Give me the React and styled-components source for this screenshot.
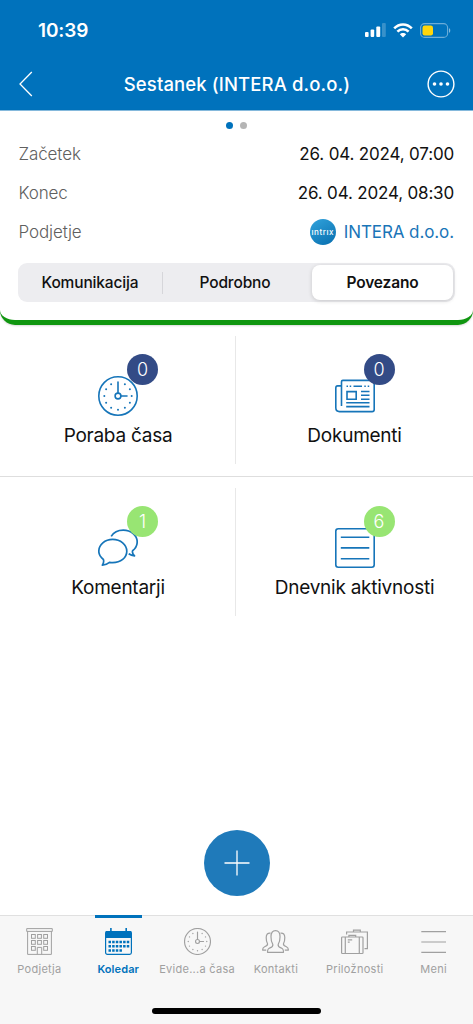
import React from "react";
import styled, { createGlobalStyle } from "styled-components";

const blue = "#0072bc";

const GlobalStyle = createGlobalStyle`
  * {
    box-sizing: border-box;
  }

  body {
    margin: 0;
    background: #fff;
    font-family: Inter, "Liberation Sans", sans-serif;
  }
`;

/* icons */

const dialDots = Array.from({ length: 12 }, (_, i) => i).filter((i) => i !== 0);

const ClockIcon = ({ size, stroke }) => (
  <svg width={size} height={size} viewBox="0 0 40 40" fill="none" stroke="currentColor" strokeWidth={stroke}>
    <circle cx="20" cy="20" r="19.2" />
    <circle cx="20" cy="20" r="2.9" />
    <path d="M20 17.1V6M22.9 20H29" strokeLinecap="round" />
    {dialDots.map((i) => (
      <circle
        key={i}
        cx={20 + 13.7 * Math.sin((i * Math.PI) / 6)}
        cy={20 - 13.7 * Math.cos((i * Math.PI) / 6)}
        r="1"
        fill="currentColor"
        stroke="none"
      />
    ))}
  </svg>
);

const NewsIcon = () => (
  <svg width="40" height="40" viewBox="0 0 40 40" fill="none" stroke="currentColor" strokeWidth="1.6">
    <path d="M6.5 30V5.8Q6.5 4.400 7.900 4.400H37.600Q39.200 4.400 39.200 6V33.500Q39.200 35.600 37.100 35.600H4.500Q.8 35.600.8 31.800V12Q.8 9.900 2.600 9.900H6.500" />
    <path d="M11.500 10.200H13M14.700 10.200H16.200M18.500 10.200H27M29.300 10.200H30.800M32.700 10.200H34.200" />
    <path d="M12 15.600H21.200V23.200H12ZM26 15.500H34.500M26 19.300H34.500M26 23.200H34.500M11.200 26.700H34.500M11.200 30.600H34.500" />
  </svg>
);

const ChatIcon = () => (
  <svg width="40" height="40" viewBox="0 0 40 40" fill="none" stroke="currentColor" strokeWidth="1.7" strokeLinejoin="round">
    <path d="M4.300 37.200C5.800 35.200 6 33.600 5.400 31.500C2.500 29.300.8 26.500.8 23.300C.8 16.700 6.900 11.400 14.700 11.400S28.800 16.700 28.800 23.300S22.600 34.600 14.700 34.600C13.600 34.600 12.500 34.500 11.500 34.300C9.600 35.800 7.300 36.700 4.300 37.200Z" />
    <path d="M13.200 8.400C15.500 4.500 20 2.100 25.300 2.100C33 2.100 39.200 7.300 39.200 13.900C39.200 17.500 37.500 20.500 34.600 22.700C34 24.500 34.800 26.200 36.500 27.800C34.200 27.600 32.300 26.800 30.700 25.700" />
  </svg>
);

const ListIcon = () => (
  <svg width="40" height="40" viewBox="0 0 40 40" fill="none" stroke="currentColor" strokeWidth="1.6">
    <rect x=".8" y=".8" width="38.400" height="38.400" rx="2.500" />
    <path d="M5.800 9.200H34.300M5.800 19.900H34.300M5.800 30.700H34.300" />
  </svg>
);

const BuildingIcon = () => (
  <svg width="27" height="27" viewBox="0 0 27 27" fill="none" stroke="currentColor">
    <path d="M.7.600H26.300V3.400H.7ZM1.600 3.400V26.400H25.400V3.400M11.300 26.400V19.400H15.700V26.400" />
    {[7, 13, 19].map((y) =>
      [5.500, 11.600, 17.700].map((x) =>
        x === 11.600 && y === 19 ? null : <rect key={`${x}-${y}`} x={x} y={y - 0.500} width="3.800" height="3.800" />
      )
    )}
  </svg>
);

const CalendarIcon = () => (
  <svg width="27" height="27" viewBox="0 0 27 27" fill="none" stroke="currentColor">
    <rect x=".6" y="3.500" width="25.800" height="22.900" rx="1.800" strokeWidth="1.200" />
    <path d="M1 3.500H26V9.500H1Z" fill="currentColor" />
    <path d="M5.900 0V4M21.200 0V4" strokeWidth="1.600" />
    <path d="M3.500 14H24.500M3.500 18.200H24.500M3.500 22.400H17.800" strokeWidth="2.500" strokeDasharray="2.500 1.150" />
  </svg>
);

const PeopleIcon = () => (
  <svg width="27" height="27" viewBox="0 0 27 27" fill="none" stroke="currentColor" strokeLinejoin="round" strokeWidth="1.200">
    <path d="M5.500 24.300C5.500 21.500 5.800 20.800 8 19.900C10.600 18.900 11.200 18 10.800 16.300C8.900 13.800 9 11.800 9 8.500C9 5 10.700 2.600 13.500 2.600S18 5 18 8.500C18 11.800 18.100 13.800 16.200 16.300C15.800 18 16.400 18.900 19 19.900C21.200 20.800 21.500 21.500 21.500 24.300Z" />
    <path d="M8.500 5.100C5.700 4.700 4.200 6.500 4.200 9.500C4.200 12 4.200 13.800 5.500 15.600C5.900 17.200 5 17.900 2.600 18.800C.9 19.500.6 20.300.6 22.100H4.200M18.500 5.100C21.300 4.700 22.800 6.500 22.800 9.500C22.800 12 22.800 13.800 21.500 15.600C21.100 17.200 22 17.900 24.400 18.800C26.100 19.500 26.400 20.300 26.400 22.100H22.800" />
  </svg>
);

const LuggageIcon = () => (
  <svg width="27" height="27" viewBox="0 0 27 27" fill="none" stroke="currentColor" strokeWidth="1.200">
    <rect x=".6" y="9" width="21.400" height="16.500" rx=".8" />
    <path d="M4.300 9V25.500M18.300 9V25.500M7.900 9V7.300H14.700V9M6.800 11.800H11.200M6.800 14.200H8.700" />
    <path d="M5.600 6.400V4H26.400V20.700H23.500M12.500 4V2.200H19.300V4" />
  </svg>
);

const MenuIcon = () => (
  <svg width="27" height="27" viewBox="0 0 27 27" stroke="currentColor" strokeWidth="1.200">
    <path d="M1.300 3.600H26M1.300 14H26M1.300 24.400H26" />
  </svg>
);

const SignalIcon = () => (
  <svg width="21" height="14" viewBox="0 0 21 14" fill="#fff">
    <rect x="0" y="9" width="3.600" height="5" rx="1" />
    <rect x="5.600" y="6.500" width="3.600" height="7.500" rx="1" />
    <rect x="11.300" y="3.400" width="3.900" height="10.600" rx="1" />
    <rect x="17" y="0" width="3.800" height="14" rx="1" opacity=".22" />
  </svg>
);

const WifiIcon = () => (
  <svg width="20" height="15" viewBox="0 0 20 15" fill="none" stroke="#fff" strokeWidth="2.500">
    <path d="M1.200 5.400C6.100.2 13.900.2 18.800 5.400M4.400 8.700C7.500 5.400 12.500 5.400 15.600 8.700" />
    <path d="M10 14.500L6.800 11.300C8.500 9.600 11.500 9.600 13.200 11.300Z" fill="#fff" stroke="none" />
  </svg>
);

const BatteryIcon = () => (
  <svg width="31" height="15" viewBox="0 0 31 15">
    <rect x=".6" y=".6" width="27" height="13.800" rx="4" fill="none" stroke="#fff" strokeOpacity=".42" strokeWidth="1.100" />
    <rect x="2.500" y="2.500" width="10.500" height="10" rx="2.200" fill="#ffd60a" />
    <path d="M29 5.200C30.700 5.700 30.700 9.300 29 9.800Z" fill="#fff" opacity=".5" />
  </svg>
);

/* page */

const App = () => {
  return (
    <Screen>
      <GlobalStyle />
      <Header>
        <StatusBar>
          <Time>10:39</Time>
          <StatusIcons>
            <SignalIcon />
            <WifiIcon />
            <BatteryIcon />
          </StatusIcons>
        </StatusBar>
        <NavBar>
          <svg width="14" height="26" viewBox="0 0 14 26" fill="none" stroke="#fff" strokeWidth="1.300">
            <path d="M12.800 1L1 13L12.800 25" />
          </svg>
          <Title>Sestanek (INTERA d.o.o.)</Title>
          <svg width="28" height="28" viewBox="0 0 28 28" fill="#fff">
            <circle cx="14" cy="14" r="12.900" fill="none" stroke="#fff" strokeWidth="1.400" />
            <circle cx="7.500" cy="14" r="1.800" />
            <circle cx="14" cy="14" r="1.800" />
            <circle cx="20.500" cy="14" r="1.800" />
          </svg>
        </NavBar>
      </Header>

      <Card>
        <Pager>
          <Dot $active />
          <Dot />
        </Pager>
        <InfoRow>
          <Label>Začetek</Label>
          <Value>26. 04. 2024, 07:00</Value>
        </InfoRow>
        <InfoRow>
          <Label>Konec</Label>
          <Value>26. 04. 2024, 08:30</Value>
        </InfoRow>
        <InfoRow>
          <Label>Podjetje</Label>
          <Company>
            <Logo>ıntrıx</Logo>
            INTERA d.o.o.
          </Company>
        </InfoRow>
        <Segments>
          <Segment>Komunikacija</Segment>
          <Divider />
          <Segment>Podrobno</Segment>
          <Segment $active>Povezano</Segment>
        </Segments>
      </Card>

      <Tiles>
        <Tile $left $top>
          <TileIcon>
            <ClockIcon size={40} stroke={1.6} />
            <Badge $color="#334b86">0</Badge>
          </TileIcon>
          <TileLabel>Poraba časa</TileLabel>
        </Tile>
        <Tile $top>
          <TileIcon>
            <NewsIcon />
            <Badge $color="#334b86">0</Badge>
          </TileIcon>
          <TileLabel>Dokumenti</TileLabel>
        </Tile>
        <Tile $left>
          <TileIcon>
            <ChatIcon />
            <Badge $color="#98e573">1</Badge>
          </TileIcon>
          <TileLabel>Komentarji</TileLabel>
        </Tile>
        <Tile>
          <TileIcon>
            <ListIcon />
            <Badge $color="#98e573">6</Badge>
          </TileIcon>
          <TileLabel>Dnevnik aktivnosti</TileLabel>
        </Tile>
      </Tiles>

      <AddButton aria-label="Dodaj">
        <svg width="26" height="26" viewBox="0 0 26 26" stroke="#fff" strokeWidth="1.300">
          <path d="M13 .5V25.500M.5 13H25.500" />
        </svg>
      </AddButton>

      <TabBar>
        <Tabs>
          <Tab><BuildingIcon />Podjetja</Tab>
          <Tab $active><CalendarIcon />Koledar</Tab>
          <Tab><ClockIcon size={27} stroke={1.7} />Evide...a časa</Tab>
          <Tab><PeopleIcon />Kontakti</Tab>
          <Tab><LuggageIcon />Priložnosti</Tab>
          <Tab><MenuIcon />Meni</Tab>
        </Tabs>
        <HomeIndicator />
      </TabBar>
    </Screen>
  );
};

const Screen = styled.div`
  width: 473px;
  height: 1024px;
  display: flex;
  flex-direction: column;
  background: #fff;
  overflow: hidden;
`;

const Header = styled.header`
  height: 110px;
  flex-shrink: 0;
  background: ${blue};
  color: #fff;
`;

const StatusBar = styled.div`
  height: 60px;
  display: flex;
  align-items: center;
  justify-content: space-between;
  padding: 0 22px 0 38px;
`;

const Time = styled.span`
  font-size: 19px;
  font-weight: 600;
  letter-spacing: -0.1px;
`;

const StatusIcons = styled.div`
  display: flex;
  align-items: center;
  gap: 7px;
`;

const NavBar = styled.div`
  height: 48px;
  display: flex;
  align-items: center;
  justify-content: space-between;
  padding: 0 18px 0 19px;
`;

const Title = styled.h1`
  margin: 0 0 0 14px;
  font-size: 18.5px;
  font-weight: 500;
  letter-spacing: 0.12px;
  white-space: nowrap;
`;

const Card = styled.section`
  height: 215px;
  flex-shrink: 0;
  padding: 12px 18px 0 18px;
  background: #fff;
  border-top: 1px solid #85b9dc;
  border-bottom: 5px solid #109610;
  border-radius: 0 0 15px 15px;
  box-shadow: 0 1px 2px rgba(0, 0, 0, 0.15);
`;

const Pager = styled.div`
  height: 11px;
  display: flex;
  justify-content: center;
  gap: 7px;
`;

const Dot = styled.span`
  width: 7px;
  height: 7px;
  margin-top: -1px;
  border-radius: 50%;
  background: ${({ $active }) => ($active ? blue : "#b5b5b5")};
`;

const InfoRow = styled.div`
  height: 39px;
  padding-right: 1px;
  display: flex;
  align-items: center;
  justify-content: space-between;
  font-size: 17px;
`;

const Label = styled.span`
  margin-left: 0.5px;
  color: #606060;
  font-weight: 300;
  letter-spacing: -0.1px;
`;

const Value = styled.span`
  color: #111;
  letter-spacing: -0.17px;
`;

const Company = styled.span`
  display: flex;
  align-items: center;
  gap: 8px;
  color: #1a75b8;
  letter-spacing: -0.1px;
`;

const Logo = styled.span`
  width: 26px;
  height: 26px;
  display: flex;
  align-items: center;
  justify-content: center;
  border-radius: 50%;
  background: linear-gradient(150deg, #31a3dc, #086eae);
  color: #fff;
  font-size: 8px;
  font-weight: 500;
  letter-spacing: 0.55px;
`;

const Segments = styled.div`
  height: 39px;
  margin-top: 12px;
  padding: 2px 2px 2px 0;
  display: flex;
  align-items: center;
  border-radius: 9px;
  background: #ededf0;
`;

const Segment = styled.button`
  width: ${({ $active }) => ($active ? 141 : 144)}px;
  height: 35px;
  margin-left: ${({ $active }) => ($active ? "auto" : 0)};
  padding: 0;
  border: 0;
  border-radius: 8px;
  background: ${({ $active }) => ($active ? "#fff" : "transparent")};
  box-shadow: ${({ $active }) => ($active ? "0 1px 4px rgba(0, 0, 0, 0.16)" : "none")};
  color: #111;
  font-family: inherit;
  font-size: 15.500px;
  font-weight: ${({ $active }) => ($active ? 600 : 500)};
  letter-spacing: -0.15px;
`;

const Divider = styled.span`
  width: 1px;
  height: 22px;
  background: #d6d6da;
`;

const Tiles = styled.div`
  display: grid;
  grid-template-columns: 236px 237px;
`;

const Tile = styled.div`
  position: relative;
  height: ${({ $top }) => ($top ? 152 : 151)}px;
  padding-top: 51px;
  display: flex;
  flex-direction: column;
  align-items: center;
  border-bottom: ${({ $top }) => ($top ? "1px solid #dedede" : "none")};

  &::after {
    content: "";
    display: ${({ $left }) => ($left ? "block" : "none")};
    position: absolute;
    top: 11px;
    right: 0;
    width: 1px;
    height: 128px;
    background: #e8e8e8;
  }
`;

const TileIcon = styled.div`
  position: relative;
  width: 40px;
  height: 40px;
  color: #1675b9;
`;

const Badge = styled.span`
  position: absolute;
  top: -22px;
  left: 29px;
  width: 31px;
  height: 31px;
  border-radius: 50%;
  background: ${({ $color }) => $color};
  color: #fff;
  font-size: 18px;
  font-weight: 300;
  line-height: 31px;
  text-align: center;
`;

const TileLabel = styled.span`
  margin-top: 8px;
  color: #111;
  font-size: 19px;
  letter-spacing: -0.25px;
  line-height: 24px;
`;

const AddButton = styled.button`
  width: 66px;
  height: 66px;
  margin: auto auto 19px;
  padding: 0;
  display: flex;
  align-items: center;
  justify-content: center;
  flex-shrink: 0;
  border: 0;
  border-radius: 50%;
  background: #1f7aba;
`;

const TabBar = styled.footer`
  height: 109px;
  flex-shrink: 0;
  display: flex;
  flex-direction: column;
  justify-content: space-between;
  align-items: center;
  padding-bottom: 10px;
  background: #f7f7f7;
  box-shadow: inset 0 1px #e0e0e0;
`;

const Tabs = styled.nav`
  width: 100%;
  display: grid;
  grid-template-columns: repeat(6, 1fr);
`;

const Tab = styled.div`
  position: relative;
  padding-top: 13px;
  display: flex;
  flex-direction: column;
  align-items: center;
  gap: 6px;
  color: ${({ $active }) => ($active ? blue : "#a0a0a0")};
  font-size: 11px;
  font-weight: ${({ $active }) => ($active ? 600 : 400)};
  letter-spacing: ${({ $active }) => ($active ? 0.1 : 0.28)}px;
  line-height: 16px;
  white-space: nowrap;

  &::before {
    content: "";
    display: ${({ $active }) => ($active ? "block" : "none")};
    position: absolute;
    top: 0;
    width: 47px;
    height: 3px;
    background: ${blue};
  }
`;

const HomeIndicator = styled.div`
  width: 169px;
  height: 6px;
  border-radius: 3px;
  background: #000;
`;

export default App;
